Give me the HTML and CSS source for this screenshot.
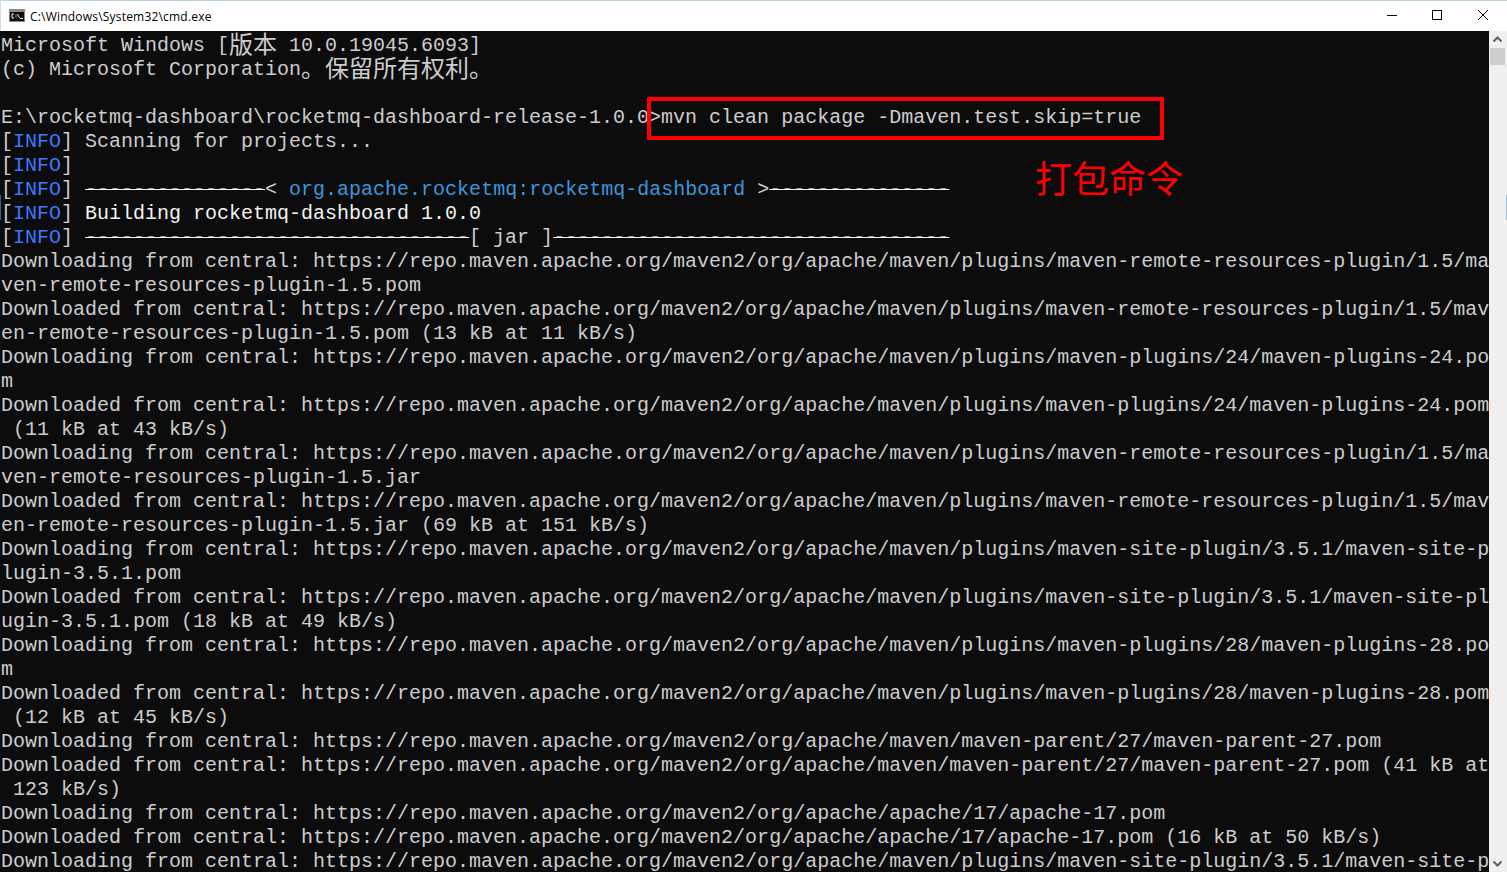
FILE: index.html
```html
<!DOCTYPE html>
<html lang="zh-CN">
<head>
<meta charset="utf-8">
<title>cmd.exe</title>
<link rel="stylesheet" href="styles.css">
</head>
<body>
<div class="window">
  <header class="titlebar">
    <svg class="app-icon" width="16" height="13" viewBox="0 0 16 13"><rect width="16" height="13" fill="#8a8a8a"/><rect x="1" y="3" width="14" height="9" fill="#0c0c0c"/><path d="M5 5H3V9H5M7 5.5V6.5M7 7.5V8.5M8.5 5L10.5 9M11 9.5H14" stroke="#f0f0f0" fill="none"/></svg>
    <span class="title">C:\Windows\System32\cmd.exe</span>
    <div class="controls">
      <svg class="ctl" width="46" height="30" viewBox="0 0 46 30"><path d="M18 14.5H28" stroke="#000" fill="none"/></svg>
      <svg class="ctl" width="46" height="30" viewBox="0 0 46 30"><rect x="17.5" y="9.5" width="9" height="9" stroke="#000" fill="none"/></svg>
      <svg class="ctl" width="46" height="30" viewBox="0 0 46 30"><path d="M17 9L27 19M27 9L17 19" stroke="#000" fill="none"/></svg>
    </div>
  </header>
  <div class="body">
    <main class="console">
      <div class="line">Microsoft Windows [<span class="cjk">版本</span> 10.0.19045.6093]</div>
      <div class="line">(c) Microsoft Corporation<span class="cjk">。保留所有权利。</span></div>
      <div class="line"></div>
      <div class="line">E:\rocketmq-dashboard\rocketmq-dashboard-release-1.0.0&gt;mvn clean package -Dmaven.test.skip=true</div>
      <div class="line">[<span class="info">INFO</span>] Scanning for projects...</div>
      <div class="line">[<span class="info">INFO</span>]</div>
      <div class="line">[<span class="info">INFO</span>] <span class="rule">---------------</span>&lt; <span class="cyan">org.apache.rocketmq:rocketmq-dashboard</span> &gt;<span class="rule">---------------</span></div>
      <div class="line">[<span class="info">INFO</span>] <span class="bright">Building rocketmq-dashboard 1.0.0</span></div>
      <div class="line">[<span class="info">INFO</span>] <span class="rule">--------------------------------</span>[ jar ]<span class="rule">---------------------------------</span></div>
      <div class="line">Downloading from central: https://repo.maven.apache.org/maven2/org/apache/maven/plugins/maven-remote-resources-plugin/1.5/ma</div>
      <div class="line">ven-remote-resources-plugin-1.5.pom</div>
      <div class="line">Downloaded from central: https://repo.maven.apache.org/maven2/org/apache/maven/plugins/maven-remote-resources-plugin/1.5/mav</div>
      <div class="line">en-remote-resources-plugin-1.5.pom (13 kB at 11 kB/s)</div>
      <div class="line">Downloading from central: https://repo.maven.apache.org/maven2/org/apache/maven/plugins/maven-plugins/24/maven-plugins-24.po</div>
      <div class="line">m</div>
      <div class="line">Downloaded from central: https://repo.maven.apache.org/maven2/org/apache/maven/plugins/maven-plugins/24/maven-plugins-24.pom</div>
      <div class="line"> (11 kB at 43 kB/s)</div>
      <div class="line">Downloading from central: https://repo.maven.apache.org/maven2/org/apache/maven/plugins/maven-remote-resources-plugin/1.5/ma</div>
      <div class="line">ven-remote-resources-plugin-1.5.jar</div>
      <div class="line">Downloaded from central: https://repo.maven.apache.org/maven2/org/apache/maven/plugins/maven-remote-resources-plugin/1.5/mav</div>
      <div class="line">en-remote-resources-plugin-1.5.jar (69 kB at 151 kB/s)</div>
      <div class="line">Downloading from central: https://repo.maven.apache.org/maven2/org/apache/maven/plugins/maven-site-plugin/3.5.1/maven-site-p</div>
      <div class="line">lugin-3.5.1.pom</div>
      <div class="line">Downloaded from central: https://repo.maven.apache.org/maven2/org/apache/maven/plugins/maven-site-plugin/3.5.1/maven-site-pl</div>
      <div class="line">ugin-3.5.1.pom (18 kB at 49 kB/s)</div>
      <div class="line">Downloading from central: https://repo.maven.apache.org/maven2/org/apache/maven/plugins/maven-plugins/28/maven-plugins-28.po</div>
      <div class="line">m</div>
      <div class="line">Downloaded from central: https://repo.maven.apache.org/maven2/org/apache/maven/plugins/maven-plugins/28/maven-plugins-28.pom</div>
      <div class="line"> (12 kB at 45 kB/s)</div>
      <div class="line">Downloading from central: https://repo.maven.apache.org/maven2/org/apache/maven/maven-parent/27/maven-parent-27.pom</div>
      <div class="line">Downloaded from central: https://repo.maven.apache.org/maven2/org/apache/maven/maven-parent/27/maven-parent-27.pom (41 kB at</div>
      <div class="line"> 123 kB/s)</div>
      <div class="line">Downloading from central: https://repo.maven.apache.org/maven2/org/apache/apache/17/apache-17.pom</div>
      <div class="line">Downloaded from central: https://repo.maven.apache.org/maven2/org/apache/apache/17/apache-17.pom (16 kB at 50 kB/s)</div>
      <div class="line">Downloading from central: https://repo.maven.apache.org/maven2/org/apache/maven/plugins/maven-site-plugin/3.5.1/maven-site-p</div>
      <div class="highlight"></div>
      <div class="note">打包命令</div>
    </main>
    <aside class="scrollbar">
      <svg class="arrow" width="17" height="17" viewBox="0 0 17 17"><path d="M4.5 10.5L8.5 6.5L12.5 10.5" stroke="#606060" stroke-width="2" fill="none"/></svg>
      <div class="thumb"></div>
      <div class="track"></div>
      <svg class="arrow" width="17" height="17" viewBox="0 0 17 17"><path d="M4.5 6.5L8.5 10.5L12.5 6.5" stroke="#606060" stroke-width="2" fill="none"/></svg>
    </aside>
    <div class="edge-mark edge-left"></div>
    <div class="edge-mark edge-right"></div>
  </div>
</div>
</body>
</html>
```
FILE: styles.css
```css
* { box-sizing: border-box; }
html, body { margin: 0; height: 100%; overflow: hidden; background: #fff; }
.window { display: flex; flex-direction: column; height: 872px; }
.titlebar { display: flex; align-items: center; height: 31px; flex: none; background: #fff; border-top: 1px solid #b9d5dc; border-left: 1px solid #d8dfe2; padding-left: 8px; }
.app-icon { flex: none; margin-bottom: 1px; }
.title { margin-left: 5px; font: 12px "Open Sans", "Liberation Sans", sans-serif; letter-spacing: 0.2px; color: #000; }
.controls { margin-left: auto; display: flex; }
.ctl { display: block; }
.body { position: relative; flex: 1; display: flex; min-height: 0; }
.console { position: relative; flex: 1; min-width: 0; overflow: hidden; padding-top: 3px; border-left: 1px solid #0c0c0c; background: #0c0c0c; color: #cccccc; font: 20px "Liberation Mono", "Noto Sans CJK SC", monospace; }
.line { height: 24px; line-height: 24px; white-space: pre; }
.cjk { font-family: "Noto Sans CJK SC", sans-serif; font-size: 24px; line-height: 0; vertical-align: -2px; }
.info { color: #3b78ff; }
.bright { color: #f2f2f2; }
.rule { color: #f2f2f2; text-decoration: line-through 1px #f2f2f2; }
.cyan { color: #3a96dd; }
.highlight { position: absolute; left: 646px; top: 66px; width: 517px; height: 43px; border: 4px solid #f00; }
.note { position: absolute; left: 1034px; top: 124px; font: 37px/44px "Noto Sans CJK SC", sans-serif; color: #f00; white-space: nowrap; }
.scrollbar { flex: none; width: 18px; display: flex; flex-direction: column; background: #f0f0f0; }
.arrow { display: block; flex: none; }
.thumb { flex: none; width: 15px; height: 17px; margin-left: 1px; background: #cdcdcd; }
.track { flex: 1; }
.edge-mark { position: absolute; top: 164px; width: 1px; height: 25px; }
.edge-left { left: 0; background: #3f5f7f; }
.edge-right { right: 0; background: #a8bccc; }
```
